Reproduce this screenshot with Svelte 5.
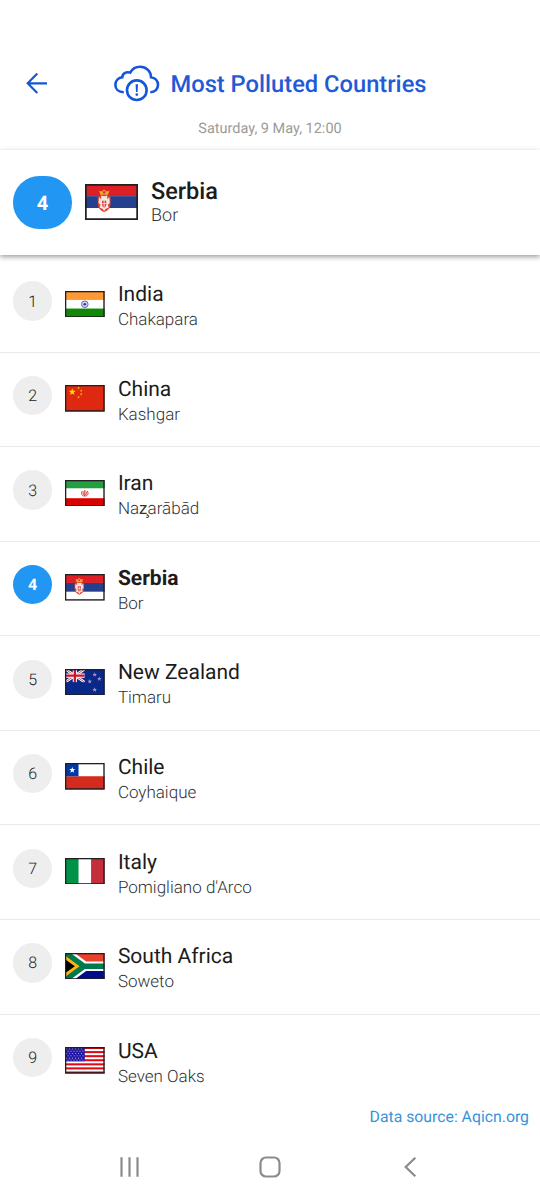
<script>
  const countries = [
    { rank: 1, code: 'in', name: 'India', city: 'Chakapara' },
    { rank: 2, code: 'cn', name: 'China', city: 'Kashgar' },
    { rank: 3, code: 'ir', name: 'Iran', city: 'Naz̧arābād' },
    { rank: 4, code: 'rs', name: 'Serbia', city: 'Bor' },
    { rank: 5, code: 'nz', name: 'New Zealand', city: 'Timaru' },
    { rank: 6, code: 'cl', name: 'Chile', city: 'Coyhaique' },
    { rank: 7, code: 'it', name: 'Italy', city: "Pomigliano d'Arco" },
    { rank: 8, code: 'za', name: 'South Africa', city: 'Soweto' },
    { rank: 9, code: 'us', name: 'USA', city: 'Seven Oaks' }
  ];
  const selected = countries[3];

  function star(cx, cy, r) {
    return Array.from({ length: 10 }, (_, i) => {
      const a = (i * Math.PI) / 5 - Math.PI / 2;
      const d = i % 2 ? r * 0.4 : r;
      return `${(cx + d * Math.cos(a)).toFixed(2)},${(cy + d * Math.sin(a)).toFixed(2)}`;
    }).join(' ');
  }
</script>

{#snippet flag(code)}
  <svg class="flag" viewBox="0 0 60 40" preserveAspectRatio="none">
    {#if code === 'in'}
      <rect width="60" height="40" fill="#fff" />
      <rect width="60" height="13.5" fill="#ff9933" />
      <rect y="26.5" width="60" height="13.5" fill="#128807" />
      <circle cx="30" cy="20" r="5" fill="#d5d5f0" stroke="#5555ae" stroke-width="1.3" />
      <circle cx="30" cy="20" r="2" fill="#3535a0" />
    {:else if code === 'cn'}
      <rect width="60" height="40" fill="#de2910" />
      <polygon points={star(11, 10.5, 5.6)} fill="#ffde00" />
      <polygon points={star(20.5, 4.5, 2.2)} fill="#ffc400" />
      <polygon points={star(24.5, 8.5, 2.2)} fill="#ffc400" />
      <polygon points={star(24.5, 14, 2.2)} fill="#ffc400" />
      <polygon points={star(20.5, 18.5, 2.2)} fill="#ffc400" />
    {:else if code === 'ir'}
      <rect width="60" height="40" fill="#fff" />
      <rect width="60" height="12.5" fill="#239f40" />
      <rect y="27.5" width="60" height="12.5" fill="#da0000" />
      <path d="M30 15V25M26.5 16.5C23.5 20 26 24 28.5 24.2M33.5 16.5C36.5 20 34 24 31.5 24.2M28 17.5C26.8 20 28 22 30 23.5C32 22 33.2 20 32 17.5" fill="none" stroke="#da2b2b" stroke-width="1.5" />
    {:else if code === 'rs'}
      <rect width="60" height="40" fill="#fff" />
      <rect width="60" height="13.5" fill="#de1f26" />
      <rect y="13.5" width="60" height="13.2" fill="#233f8e" />
      <path d="M17.5 12L16 7.5L19 8.2L21.5 6L24.500 8.2L27.500 7.5L26 12Z" fill="#e8b030" />
      <circle cx="21.7" cy="9.3" r="1.4" fill="#c6363c" />
      <path d="M14.500 15C16 12.800 18.500 12 21.700 12C25 12 27.500 12.800 28.900 15V22C28.900 27 25.500 30 21.700 31.200C17.900 30 14.500 27 14.500 22Z" fill="#e9432c" />
      <path d="M18.500 12.800C20.500 14 23 14 25 12.800L25.200 17L27.500 14.800L28 21L25.800 23L26.800 26.500L23.500 27.500L21.700 30L19.900 27.500L16.600 26.500L17.600 23L15.400 21L15.900 14.800L18.200 17Z" fill="#f6e6e4" />
      <path d="M19.300 18.500H24.100V22.500C24.100 24.800 23 25.800 21.700 26.300C20.400 25.800 19.300 24.800 19.300 22.500Z" fill="#df4240" />
      <path d="M21.700 18.500V26M19.500 21.800H23.900" stroke="#fff" stroke-width=".8" />
    {:else if code === 'nz'}
      <rect width="60" height="40" fill="#08298a" />
      <svg width="30" height="20" viewBox="0 0 30 20">
        <path d="M0 0L30 20M30 0L0 20" stroke="#fff" stroke-width="4" />
        <path d="M0 0L30 20M30 0L0 20" stroke="#c8334e" stroke-width="1.3" />
        <path d="M15 0V20M0 10H30" stroke="#fff" stroke-width="6.5" />
        <path d="M15 0V20M0 10H30" stroke="#cc142b" stroke-width="3.6" />
      </svg>
      {#each [[45, 8.5], [37.5, 18.8], [52, 15], [45, 31.5]] as [x, y]}
        <polygon points={star(x, y, 3.5)} fill="#c6b8da" />
        <polygon points={star(x, y, 1.9)} fill="#b05a86" />
      {/each}
    {:else if code === 'cl'}
      <rect width="60" height="40" fill="#fff" />
      <rect y="20" width="60" height="20" fill="#d52b1e" />
      <rect width="20.5" height="20" fill="#0039a6" />
      <polygon points={star(11, 10.8, 4.9)} fill="#fff" />
    {:else if code === 'it'}
      <rect width="60" height="40" fill="#fff" />
      <rect width="20.5" height="40" fill="#009246" />
      <rect x="39.5" width="20.5" height="40" fill="#c42f3b" />
    {:else if code === 'za'}
      <rect width="60" height="20" fill="#e8402a" />
      <rect y="20" width="60" height="20" fill="#000c8a" />
      <path d="M0 -2L30 20L0 42M27 20H60" fill="none" stroke="#fff" stroke-width="14" />
      <path d="M0 0L30 20L0 40Z" fill="#ffb612" />
      <path d="M-1 -2L29 20L-1 42M27 20H60" fill="none" stroke="#007a4d" stroke-width="8" />
      <path d="M0 5.5L20.5 20L0 34.5Z" fill="#ffb612" />
      <path d="M0 9.5L15 20L0 30.5Z" fill="#000" />
    {:else}
      <rect width="60" height="40" fill="#fff" />
      {#each [0, 1, 2, 3, 4, 5, 6] as i}
        <rect y={(i * 80) / 13} width="60" height="3.08" fill="#e30613" />
      {/each}
      <rect width="30" height="21.54" fill="#2419a4" />
      {#each [2.8, 6.3, 9.8, 13.3, 16.8, 19.8] as y, r}
        {#each [2.5, 7, 11.5, 16, 20.5, 25] as x}
          <circle cx={x + (r % 2) * 2.2} cy={y} r=".85" fill="#aaa4e2" />
        {/each}
      {/each}
    {/if}
    <rect x=".9" y=".9" width="58.2" height="38.2" fill="none" stroke="#221e22" stroke-width="2.1" />
  </svg>
{/snippet}

<main class="screen">
  <header>
    <div class="bar">
      <svg class="back" viewBox="0 0 22 22" aria-hidden="true">
        <path d="M11.3 1.6L1.7 11.3L11.3 21M1.7 11.3H21" fill="none" stroke="#1555dc" stroke-width="2.15" />
      </svg>
      <svg class="cloud" viewBox="0 0 48 40" aria-hidden="true">
        <g fill="none" stroke="#1555dc" stroke-width="2.6">
          <path d="M10.8 28.2C5.5 28.2 2.4 25 2.4 21C2.4 16.5 5.5 13.7 9.3 13.3C9.3 9.5 13 7.3 17.2 8.6C19.5 4.5 23 2.8 27 2.8C33.5 2.8 38 7.5 38 13.2C42 13.8 45 16.8 45 21C45 25 42 28.2 37.3 28.2" />
          <circle cx="23.8" cy="26.2" r="9.8" />
        </g>
        <path d="M22.6 20.3H25L24.6 28H23Z" fill="#1555dc" />
        <circle cx="23.8" cy="30.6" r="1.35" fill="#1555dc" />
      </svg>
      <h1>Most Polluted Countries</h1>
    </div>
    <p class="date">Saturday, 9 May, 12:00</p>
  </header>

  <section class="current">
    <span class="rank">{selected.rank}</span>
    {@render flag(selected.code)}
    <div class="place">
      <strong>{selected.name}</strong>
      <span>{selected.city}</span>
    </div>
  </section>

  <ul>
    {#each countries as c}
      <li class:active={c.rank === selected.rank}>
        <span class="rank">{c.rank}</span>
        {@render flag(c.code)}
        <div class="place">
          <strong>{c.name}</strong>
          <span>{c.city}</span>
        </div>
      </li>
    {/each}
  </ul>

  <p class="source">Data source: Aqicn.org</p>

  <nav>
    <svg viewBox="0 0 22 22"><path d="M2.5 1.3V20.7M10.5 1.3V20.7M18.5 1.3V20.7" fill="none" stroke="#8b8b8b" stroke-width="2.2" /></svg>
    <svg viewBox="0 0 22 22"><rect x="1.5" y="1.5" width="19" height="19" rx="5.5" fill="none" stroke="#8b8b8b" stroke-width="2.2" /></svg>
    <svg viewBox="0 0 22 22"><path d="M16.300 1.8L6.700 11L16.300 20.2" fill="none" stroke="#8b8b8b" stroke-width="2.2" /></svg>
  </nav>
</main>

<style>
  :global(body) {
    background: #fff;
  }
  .screen {
    box-sizing: border-box;
    width: 540px;
    height: 1200px;
    display: flex;
    flex-direction: column;
    overflow: hidden;
    font-family: Roboto, sans-serif;
    text-rendering: geometricPrecision;
    color: #1c1c1c;
    background: #fff;
  }
  h1, p, ul {
    margin: 0;
    padding: 0;
  }
  header {
    box-sizing: border-box;
    flex: none;
    height: 150px;
    padding-top: 62px;
  }
  .bar {
    display: flex;
    align-items: center;
    height: 43px;
    padding-left: 26px;
  }
  .back {
    width: 22px;
    height: 22px;
    margin-top: -1px;
    margin-right: 65px;
  }
  .cloud {
    width: 48px;
    height: 40px;
    margin-right: 9.5px;
  }
  h1 {
    font-size: 23.7px;
    line-height: 28px;
    font-weight: 500;
    color: #1f5bd6;
    white-space: nowrap;
  }
  .date {
    margin-top: 15px;
    text-align: center;
    font-size: 14.5px;
    line-height: 18px;
    color: #9b9b9b;
  }
  .current {
    box-sizing: border-box;
    position: relative;
    flex: none;
    display: flex;
    align-items: flex-start;
    height: 105px;
    padding: 26.3px 13px 0;
    background: #fff;
    box-shadow: 0 2px 5px rgba(0, 0, 0, 0.38);
  }
  .rank {
    flex: none;
    display: flex;
    align-items: center;
    justify-content: center;
    width: 39.3px;
    height: 39.3px;
    border-radius: 50%;
    background: #eee;
    font-size: 16px;
    font-weight: 300;
  }
  .flag {
    flex: none;
    display: block;
    width: 39.6px;
    height: 26.5px;
    margin: 9.3px 13px 0;
  }
  .place {
    display: flex;
    flex-direction: column;
    padding-top: 0.9px;
    white-space: nowrap;
  }
  .place strong {
    font-size: 21px;
    line-height: 26px;
    font-weight: 400;
  }
  .place span {
    font-size: 17px;
    line-height: 24px;
    font-weight: 300;
    color: #333;
  }
  .current .rank {
    width: 59px;
    height: 52.5px;
    border-radius: 26.25px;
    background: #2196f3;
    color: #fff;
    font-size: 20px;
    font-weight: 700;
  }
  .current .flag {
    width: 53px;
    height: 36px;
    margin-top: 8.2px;
  }
  .current strong {
    font-size: 23.5px;
    font-weight: 500;
    line-height: 29px;
  }
  .current .place span {
    font-size: 18px;
    line-height: 20px;
  }
  ul {
    flex: none;
    margin-top: 3.2px;
    list-style: none;
  }
  li {
    box-sizing: border-box;
    display: flex;
    align-items: flex-start;
    height: 94.55px;
    padding: 23.2px 13px 0;
    border-bottom: 1px solid #e9e9e9;
  }
  li:last-child {
    border-bottom: 0;
    height: 90px;
  }
  .active .rank {
    background: #2196f3;
    color: #fff;
    font-weight: 700;
  }
  .active strong {
    font-weight: 700;
  }
  .source {
    padding-right: 11px;
    text-align: right;
    font-size: 15.8px;
    line-height: 20px;
    margin-top: 2.5px;
    color: #3993d8;
  }
  nav {
    display: flex;
    justify-content: space-between;
    margin-top: 29px;
    padding: 0 119px;
  }
  nav svg {
    width: 22px;
    height: 22px;
  }
</style>
